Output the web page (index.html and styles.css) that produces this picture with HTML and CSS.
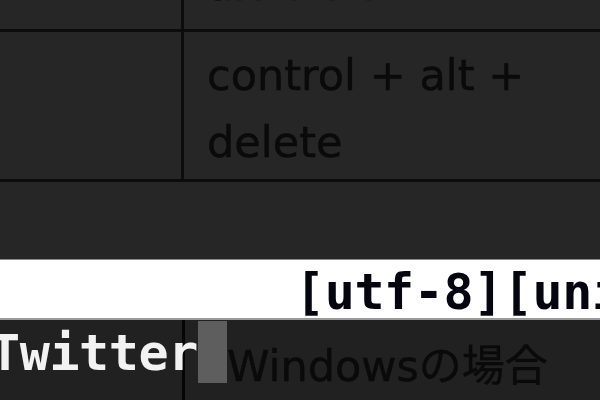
FILE: index.html
```html
<!DOCTYPE html>
<html lang="ja">
<head>
<meta charset="utf-8">
<title>terminal</title>
<link rel="stylesheet" href="styles.css">
</head>
<body>
<div class="screen">
  <div class="table">
    <div class="row row-top">
      <div class="cell cell-left"></div>
      <div class="cell cell-right"><span class="line">alt + F4</span></div>
    </div>
    <div class="row row-mid">
      <div class="cell cell-left"></div>
      <div class="cell cell-right">
        <span class="line">control + alt +</span>
        <span class="line">delete</span>
      </div>
    </div>
  </div>
  <div class="gap"></div>
  <div class="status"><span class="status-text">[utf-8][unix]</span></div>
  <div class="bottom">
    <span class="mono-line">Twitter</span>
    <span class="cursor"></span>
    <span class="cell-text">Windowsの場合</span>
  </div>
</div>
</body>
</html>
```
FILE: styles.css
```css
html, body {
  margin: 0;
  padding: 0;
  background: #252525;
}
.screen {
  width: 600px;
  height: 400px;
  overflow: hidden;
  display: flex;
  flex-direction: column;
  background: #262626;
  filter: blur(0.6px);
}
.table {
  display: flex;
  flex-direction: column;
}
.row {
  display: flex;
  border-bottom: 3px solid #0c0c0c;
}
.cell {
  font-family: "DejaVu Sans", "Noto Sans CJK JP", sans-serif;
  font-size: 43px;
  line-height: 67px;
  color: #0a0a0a;
  -webkit-text-stroke: 0.4px #0a0a0a;
}
.cell-left {
  width: 181px;
  flex: none;
  border-right: 3px solid #0c0c0c;
}
.cell-right {
  flex: 1;
  padding-left: 23px;
  display: flex;
  flex-direction: column;
  overflow: hidden;
}
.line {
  display: block;
  white-space: nowrap;
}
.row-top {
  height: 29px;
  overflow: hidden;
}
.row-top .cell-right {
  justify-content: flex-end;
  padding-bottom: 10px;
}
.row-mid .cell-right {
  padding-top: 10px;
  padding-bottom: 3px;
}
.gap {
  height: 77px;
  flex: none;
}
.status {
  flex: none;
  height: 58px;
  background: #ffffff;
  border-top: 1px solid #8a8a8a;
  border-bottom: 2px solid #9a9a9a;
  padding-left: 295px;
  overflow: hidden;
  white-space: nowrap;
}
.status-text {
  display: block;
  font-family: "DejaVu Sans Mono", monospace;
  font-weight: bold;
  font-size: 50px;
  letter-spacing: -0.4px;
  line-height: 58px;
  padding-top: 3px;
  color: #050510;
}
.bottom {
  flex: 1;
  display: flex;
  align-items: flex-start;
  background-color: #212121;
  background-image: linear-gradient(to right, transparent 182px, #050505 182px, #050505 185px, transparent 185px);
  white-space: nowrap;
}
.mono-line {
  font-family: "DejaVu Sans Mono", monospace;
  font-weight: bold;
  font-size: 50px;
  letter-spacing: -0.4px;
  line-height: 58px;
  color: #f2f2f2;
  margin-left: -10px;
  margin-top: 4px;
}
.cursor {
  width: 29px;
  height: 62px;
  margin-top: 1px;
  background: #5e5e5e;
  flex: none;
}
.cell-text {
  font-family: "DejaVu Sans", "Noto Sans CJK JP", sans-serif;
  font-size: 43px;
  line-height: 67px;
  color: #0a0a0a;
  -webkit-text-stroke: 0.4px #0a0a0a;
  margin-top: 13px;
}
```
